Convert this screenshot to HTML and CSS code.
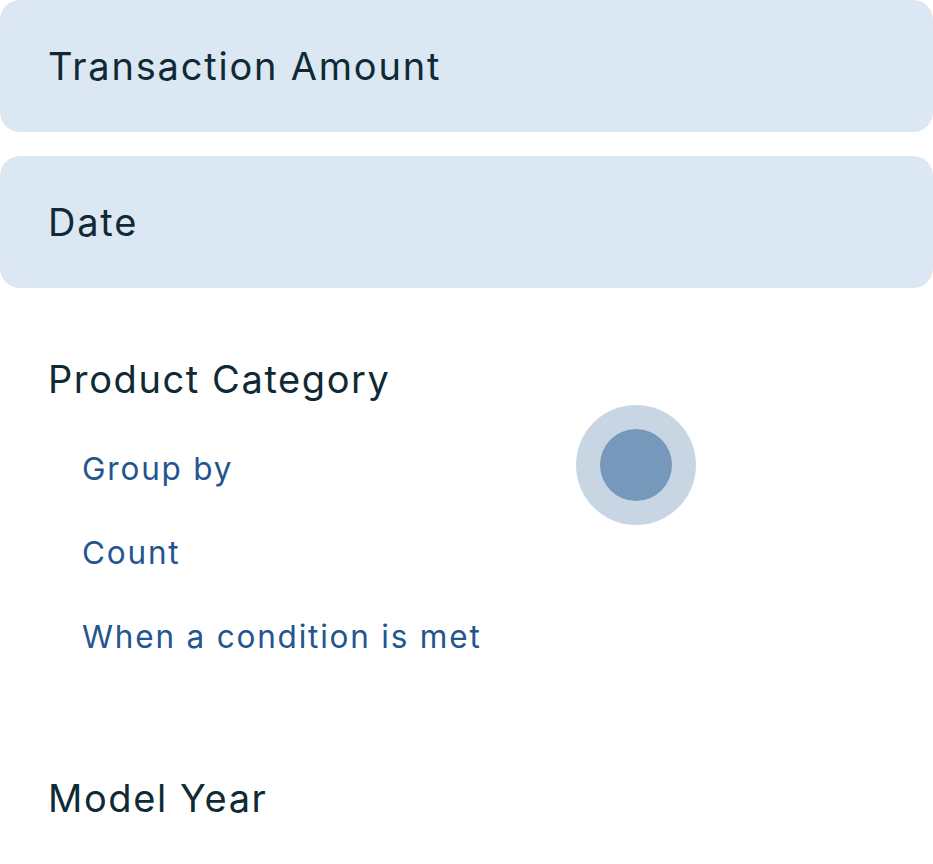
FILE: index.html
```html
<!DOCTYPE html>
<html lang="en">
<head>
<meta charset="utf-8">
<title>Fields</title>
<link rel="stylesheet" href="styles.css">
</head>
<body>
<div class="panel">
  <div class="card"><span class="label">Transaction Amount</span></div>
  <div class="card"><span class="label">Date</span></div>
  <div class="section">
    <div class="title"><span class="label">Product Category</span></div>
    <ul class="options">
      <li class="option">Group by<span class="ripple"><span class="ripple-dot"></span></span></li>
      <li class="option">Count</li>
      <li class="option">When a condition is met</li>
    </ul>
  </div>
  <div class="title last"><span class="label">Model Year</span></div>
</div>
</body>
</html>
```

FILE: styles.css
```css
html, body {
  margin: 0;
  padding: 0;
  background: #ffffff;
}

body {
  font-family: "Inter", "Liberation Sans", sans-serif;
  color: #0f2a34;
  width: 933px;
  height: 864px;
  overflow: hidden;
}

.panel {
  display: flex;
  flex-direction: column;
}

.card {
  height: 132px;
  border-radius: 20px;
  background: #dbe7f2;
  display: flex;
  align-items: center;
  padding-left: 48px;
  margin-bottom: 24px;
  font-size: 38px;
  letter-spacing: 1.8px;
}

.card:nth-child(2) {
  margin-bottom: 0;
}

.title {
  height: 84px;
  display: flex;
  align-items: center;
  padding-left: 48px;
  font-size: 38px;
  letter-spacing: 1.6px;
  margin-top: 49px;
}

.title.last {
  margin-top: 78px;
}

.options {
  list-style: none;
  margin: 5px 0 0 0;
  padding: 0;
}

.option {
  position: relative;
  height: 84px;
  display: flex;
  align-items: center;
  padding-left: 82px;
  font-size: 31.5px;
  letter-spacing: 1.8px;
  color: #23558f;
}

.ripple {
  position: absolute;
  left: 576px;
  top: -21px;
  width: 120px;
  height: 120px;
  border-radius: 50%;
  background: #c8d6e4;
  display: flex;
  align-items: center;
  justify-content: center;
}

.ripple-dot {
  width: 72px;
  height: 72px;
  border-radius: 50%;
  background: #7598bb;
}
```
